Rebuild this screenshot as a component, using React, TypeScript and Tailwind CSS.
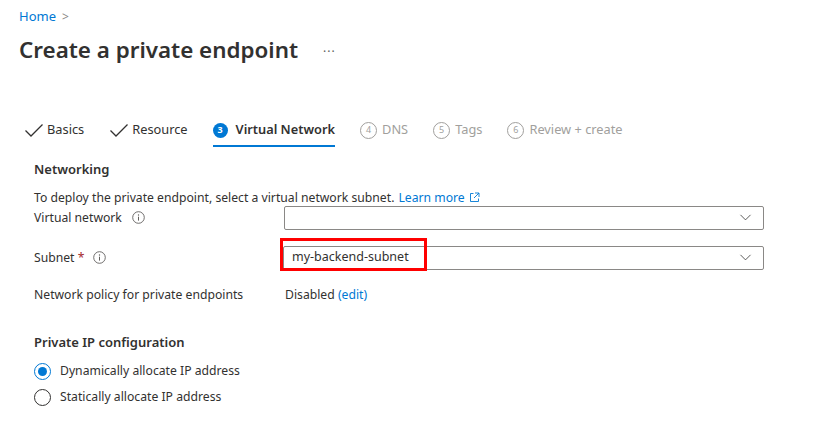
import { ChevronDown } from "lucide-react";

const font = { fontFamily: '"Noto Sans", "Open Sans", sans-serif' };

type Step = { label: string; state: "done" | "current" | "todo"; n?: number };

const steps: Step[] = [
  { label: "Basics", state: "done" },
  { label: "Resource", state: "done" },
  { label: "Virtual Network", state: "current", n: 3 },
  { label: "DNS", state: "todo", n: 4 },
  { label: "Tags", state: "todo", n: 5 },
  { label: "Review + create", state: "todo", n: 6 },
];

function Check() {
  return (
    <svg width="20" height="16" viewBox="0 0 20 16" className="shrink-0">
      <path d="M1.5 8.5 L7 14 L18.5 2.5" fill="none" stroke="#323130" strokeWidth="1.3" />
    </svg>
  );
}

function InfoIcon() {
  return (
    <svg width="13" height="13" viewBox="0 0 13 13" className="shrink-0">
      <circle cx="6.5" cy="6.5" r="5.8" fill="none" stroke="#605e5c" strokeWidth="0.9" />
      <circle cx="6.5" cy="4" r="0.7" fill="#605e5c" />
      <path d="M6.5 5.7 V9.6" stroke="#605e5c" strokeWidth="1" />
    </svg>
  );
}

function ExternalIcon() {
  return (
    <svg width="11" height="11" viewBox="0 0 11 11" className="shrink-0">
      <path d="M4.5 1.5 H1.5 V9.5 H9.5 V6.5" fill="none" stroke="#0078d4" strokeWidth="0.9" />
      <path d="M6 1 H10 V5 M10 1 L5 6" fill="none" stroke="#0078d4" strokeWidth="0.9" />
    </svg>
  );
}

function StepTab({ s }: { s: Step }) {
  if (s.state === "done") {
    return (
      <div className="flex items-center gap-[3px] h-[34px] text-[12.8px] text-[#323130]">
        <Check />
        <span>{s.label}</span>
      </div>
    );
  }
  if (s.state === "current") {
    return (
      <div className="flex items-center gap-[8px] h-[34px] text-[12.8px] text-[#323130] font-semibold border-b-2 border-[#0078d4] pt-[2px]">
        <span className="w-[15px] h-[15px] rounded-full bg-[#0078d4] text-white text-[9px] font-bold flex items-center justify-center">
          {s.n}
        </span>
        <span>{s.label}</span>
      </div>
    );
  }
  return (
    <div className="flex items-center gap-[5px] h-[34px] text-[12.8px] text-[#a19f9d]">
      <span className="w-[17px] h-[17px] rounded-full border border-[#a19f9d] text-[9px] flex items-center justify-center">
        {s.n}
      </span>
      <span>{s.label}</span>
    </div>
  );
}

function Select({ value }: { value?: string }) {
  return (
    <div className="w-[481px] h-[24px] border border-[#8a8886] rounded-[2px] flex items-center justify-between pl-[8px] pr-[8px] text-[12.5px] text-[#323130]">
      <span>{value ?? ""}</span>
      <ChevronDown size={19} strokeWidth={1} color="#323130" />
    </div>
  );
}

function Radio({ checked, label }: { checked?: boolean; label: string }) {
  return (
    <div className="flex items-center gap-[9px] h-[26px]">
      <span
        className={`w-[17px] h-[17px] rounded-full border flex items-center justify-center ${
          checked ? "border-[#0078d4]" : "border-[#323130]"
        }`}
      >
        {checked && <span className="w-[9px] h-[9px] rounded-full bg-[#0078d4]" />}
      </span>
      <span className="text-[12.2px] text-[#323130]">{label}</span>
    </div>
  );
}

export default function App() {
  return (
    <div className="w-[836px] h-[436px] bg-white overflow-hidden" style={font}>
      <div className="pl-[19px] pt-[8px]">
        <div className="flex items-center gap-[6px] text-[13px] h-[18px]">
          <span className="text-[#0078d4]">Home</span>
          <span className="text-[#8a8886] text-[12px]">&gt;</span>
        </div>
        <div className="flex items-center mt-[9px] h-[30px]">
          <h1 className="text-[22.4px] font-semibold text-[#323130]">Create a private endpoint</h1>
          <span className="ml-[25px] text-[#605e5c] text-[12px] tracking-[1px] leading-none pb-[4px]">...</span>
        </div>
      </div>

      <div className="flex items-center gap-[25px] pl-[24px] mt-[48px]">
        {steps.map((s) => (
          <StepTab key={s.label} s={s} />
        ))}
      </div>

      <div className="pl-[34px] pr-[72px]">
        <div className="mt-[13px] text-[13px] font-semibold text-[#323130]">Networking</div>
        <div className="mt-[9px] flex items-center gap-[4px] text-[12.2px] text-[#323130]">
          <span>To deploy the private endpoint, select a virtual network subnet.</span>
          <span className="text-[#0078d4]">Learn more</span>
          <ExternalIcon />
        </div>

        <div className="flex items-center mt-[-1px]">
          <div className="w-[250px] flex items-center gap-[10px] text-[12.2px] text-[#323130]">
            <span>Virtual network</span>
            <InfoIcon />
          </div>
          <Select />
        </div>

        <div className="flex items-center mt-[16px]">
          <div className="w-[250px] flex items-center gap-[9px] text-[12.2px] text-[#323130]">
            <span>
              Subnet <span className="text-[#a4262c]">*</span>
            </span>
            <InfoIcon />
          </div>
          <div className="relative">
            <Select value="my-backend-subnet" />
            <div className="absolute left-[-3px] top-[-8px] w-[147px] h-[33px] border-[3px] border-[#ff0000]" />
          </div>
        </div>

        <div className="flex items-center mt-[16px] text-[12.2px] text-[#323130]">
          <div className="w-[251px]">Network policy for private endpoints</div>
          <div>
            Disabled <span className="text-[#0078d4]">(edit)</span>
          </div>
        </div>

        <div className="mt-[29px] text-[13px] font-semibold text-[#323130]">Private IP configuration</div>
        <div className="mt-[6px] flex flex-col">
          <Radio checked label="Dynamically allocate IP address" />
          <Radio label="Statically allocate IP address" />
        </div>
      </div>
    </div>
  );
}
